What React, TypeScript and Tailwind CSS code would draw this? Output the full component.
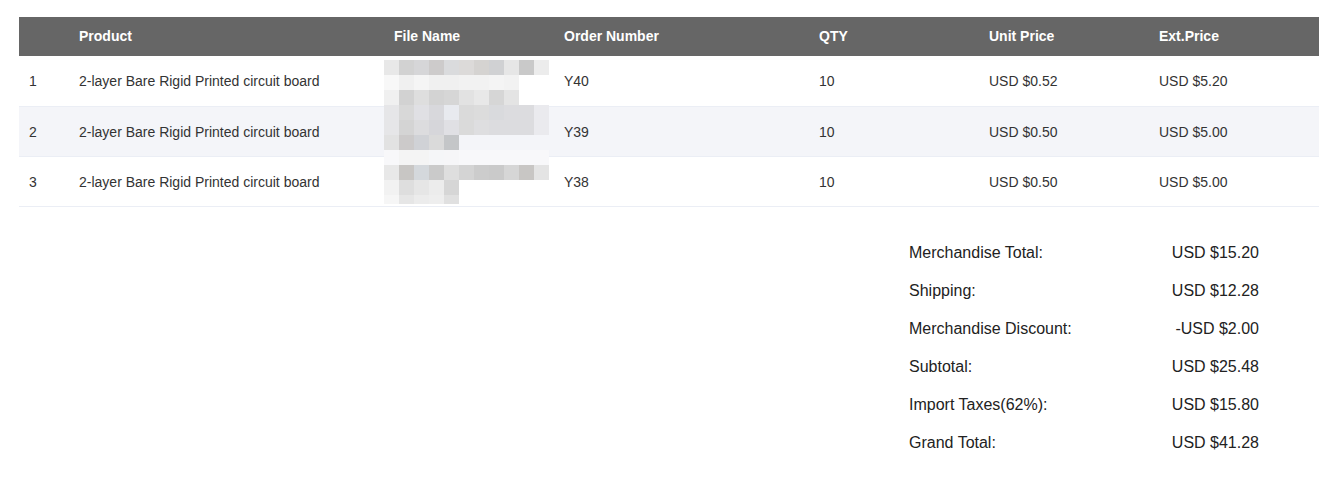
import React from 'react';

const rows = [
  { n: 1, product: '2-layer Bare Rigid Printed circuit board', order: 'Y40', qty: 10, unit: 'USD $0.52', ext: 'USD $5.20' },
  { n: 2, product: '2-layer Bare Rigid Printed circuit board', order: 'Y39', qty: 10, unit: 'USD $0.50', ext: 'USD $5.00' },
  { n: 3, product: '2-layer Bare Rigid Printed circuit board', order: 'Y38', qty: 10, unit: 'USD $0.50', ext: 'USD $5.00' },
];

const summary = [
  ['Merchandise Total:', 'USD $15.20'],
  ['Shipping:', 'USD $12.28'],
  ['Merchandise Discount:', '-USD $2.00'],
  ['Subtotal:', 'USD $25.48'],
  ['Import Taxes(62%):', 'USD $15.80'],
  ['Grand Total:', 'USD $41.28'],
];

// blurred file name redaction, 15px blocks (null = transparent)
const mosaic: (string | null)[][] = [
  ['#e8e8e8', '#d2d2d2', '#d6d6d8', '#cdcbcb', '#dadbdd', '#dcdad9', '#d5d3d1', '#d0d1d3', '#e6e6e6', '#c9c9c9', '#ececec'],
  ['#f8f8f8', '#f0f0f0', '#f5f5f5', '#f0f0f0', '#f0f0f0', '#f2f2f2', '#f2f2f2', '#f4f4f4', '#f2f2f2', null, null],
  ['#f0f0f0', '#d2d2d2', '#dedede', '#d3d3d3', '#d6d6d6', '#e2e2e2', '#e8e8e8', '#d6d6d6', '#e4e4e4', null, null],
  ['#e6e6e8', '#d8d8d8', '#e0e0e4', '#d8d8dc', '#e8eaef', '#dadada', '#dcdcdc', '#d9dadd', '#dcdcdf', '#dcdcdf', '#eaeaee'],
  ['#e6e6e8', '#d4d4d4', '#dcdcde', '#d6d6da', '#e0e0e4', '#dadada', '#dedee0', '#dcdcdf', '#dcdcdf', '#dcdcdf', '#eaeaee'],
  ['#e2e2e2', '#cccaca', '#d0d2d6', '#dadada', '#c4c6c8', null, null, null, null, null, null],
  ['#f8f8fa', '#f4f4f4', '#f4f4f4', '#f5f6f8', '#f6f6f8', '#f8f8fa', '#f8f8fa', '#f8f8fa', '#f8f8fa', '#f8f8fa', '#f8f8fa'],
  ['#e8e8e8', '#c8c6c4', '#d4d8dc', '#cacaca', '#dedede', '#d4d4d4', '#cccccc', '#cacaca', '#d6d6d6', '#c8c6c4', '#e4e4e4'],
  ['#f2f2f2', '#dedede', '#e6e6e6', '#ececec', '#d6d6d6', null, null, null, null, null, null],
  ['#f6f6f6', '#e6e6e6', '#ececec', '#eeeeee', '#e0e0e0', null, null, null, null, null, null],
];

function Mosaic() {
  return (
    <div className="absolute left-[365px] top-[43px] flex flex-col">
      {mosaic.map((r, i) => (
        <div key={i} className={`flex ${i === mosaic.length - 1 ? 'h-[9px]' : 'h-[15px]'}`}>
          {r.map((c, j) => (
            <div key={j} className="w-[15px] h-full" style={{ backgroundColor: c ?? 'transparent' }} />
          ))}
        </div>
      ))}
    </div>
  );
}

export default function App() {
  return (
    <div className="w-[1337px] bg-white pt-[17px] px-[19px] pb-[24px] text-[#333] font-['Liberation_Sans',Arial,sans-serif]">
      <div className="relative">
        <table className="w-[1300px] table-fixed border-collapse text-[14px]">
          <colgroup>
            <col className="w-[50px]" />
            <col className="w-[315px]" />
            <col className="w-[170px]" />
            <col className="w-[255px]" />
            <col className="w-[170px]" />
            <col className="w-[170px]" />
            <col className="w-[170px]" />
          </colgroup>
          <thead>
            <tr className="h-[39px] bg-[#666666] text-white font-bold text-left">
              <th className="px-[10px]"></th>
              <th className="px-[10px]">Product</th>
              <th className="px-[10px]">File Name</th>
              <th className="px-[10px]">Order Number</th>
              <th className="px-[10px]">QTY</th>
              <th className="px-[10px]">Unit Price</th>
              <th className="px-[10px]">Ext.Price</th>
            </tr>
          </thead>
          <tbody>
            {rows.map((r) => (
              <tr key={r.n} className={`h-[50px] border-b border-[#ebeef5] ${r.n === 2 ? 'bg-[#f4f5f9]' : 'bg-white'}`}>
                <td className="px-[10px] pt-[2px]">{r.n}</td>
                <td className="px-[10px] pt-[2px]">{r.product}</td>
                <td className="px-[10px] pt-[2px]"></td>
                <td className="px-[10px] pt-[2px]">{r.order}</td>
                <td className="px-[10px] pt-[2px]">{r.qty}</td>
                <td className="px-[10px] pt-[2px]">{r.unit}</td>
                <td className="px-[10px] pt-[2px]">{r.ext}</td>
              </tr>
            ))}
          </tbody>
        </table>
        <Mosaic />
      </div>

      <div className="flex justify-end pr-[59px] pt-[27px]">
        <div className="w-[350px] flex flex-col text-[16px] text-[#222]">
          {summary.map(([label, value]) => (
            <div key={label} className="h-[38px] flex items-center justify-between">
              <span>{label}</span>
              <span>{value}</span>
            </div>
          ))}
        </div>
      </div>
    </div>
  );
}
